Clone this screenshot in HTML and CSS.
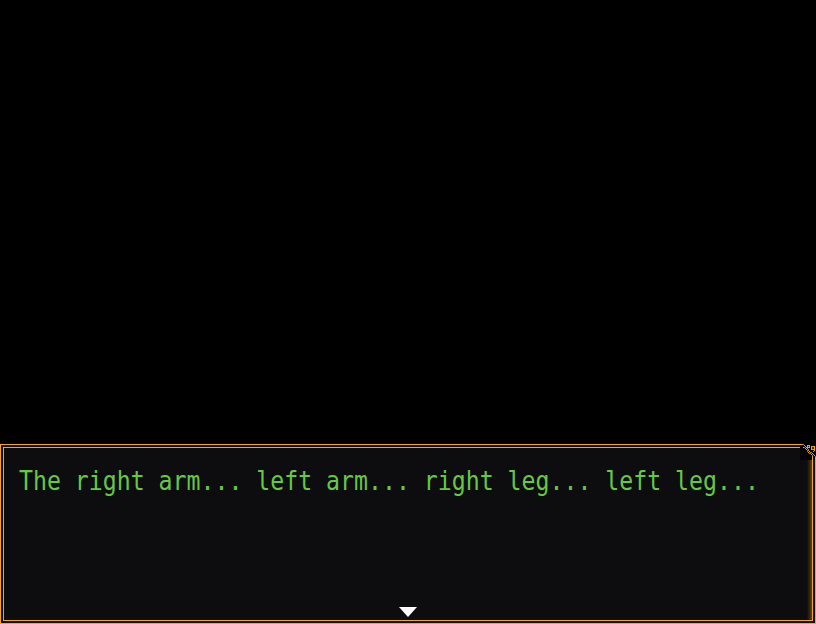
FILE: index.html
```html
<!DOCTYPE html>
<html>
<head>
<meta charset="utf-8">
<link rel="stylesheet" href="styles.css">
</head>
<body>
<div class="screen">
  <div class="stage"></div>
  <div class="window">
    <div class="inner">
      <p class="message">The right arm... left arm... right leg... left leg...</p>
      <div class="pause"></div>
    </div>
    <svg class="ornament" width="16" height="16" viewBox="0 0 16 16">
      <rect x="0" y="0" width="16" height="16" fill="#000"/>
      <path d="M0 0.5 H3.5 L8.5 5.5 V6.5 L10.5 8.5 H11.5 L15.5 12.5 V16" stroke="#f7a416" stroke-width="1" fill="none"/>
      <path d="M3 3.5 H4.5 L7.5 6.5 V7.5 L9.5 9.5 H10.5 L12.5 11.5 V16" stroke="#f7a416" stroke-width="1" fill="none"/>
      <rect x="7.5" y="1.5" width="2" height="2" stroke="#f7a416" stroke-width="1" fill="none"/>
      <rect x="11.5" y="2.5" width="3" height="3" stroke="#f7a416" stroke-width="1" fill="none"/>
      <rect x="12.5" y="3.5" width="1" height="1" fill="#f7a416"/>
      <rect x="14" y="6" width="1" height="1" fill="#f7a416"/>
      <rect x="13" y="7" width="1" height="1" fill="#f7a416"/>
    </svg>
  </div>
</div>
</body>
</html>
```

FILE: styles.css
```css
html, body {
  margin: 0;
  padding: 0;
  background: #000;
}
.screen {
  width: 816px;
  height: 624px;
  display: flex;
  flex-direction: column;
  background: #000;
  overflow: hidden;
}
.stage {
  flex: 1;
}
.window {
  position: relative;
  height: 180px;
  box-sizing: border-box;
  border: 1px solid #f7a416;
  padding: 2px;
  background: #0d0d10;
}
.inner {
  position: relative;
  height: 100%;
  box-sizing: border-box;
  border: 1px solid #f7a416;
  background: linear-gradient(to right, #0d0d10 0, #0d0d10 calc(100% - 5px), #3a2a10 calc(100% - 2px), #6a4410 100%);
  padding: 0 0 0 15px;
}
.message {
  margin: 0;
  padding-top: 15px;
  font-family: "DejaVu Sans Mono", monospace;
  font-size: 23.2px;
  line-height: 32px;
  color: #66c843;
  white-space: nowrap;
  transform: scaleY(1.12);
  transform-origin: 0 12px;
}
.pause {
  position: absolute;
  left: 395px;
  bottom: 3px;
  width: 0;
  height: 0;
  border-left: 9px solid transparent;
  border-right: 9px solid transparent;
  border-top: 10px solid #fff;
}
.ornament {
  position: absolute;
  top: -1px;
  right: -1px;
}
```
